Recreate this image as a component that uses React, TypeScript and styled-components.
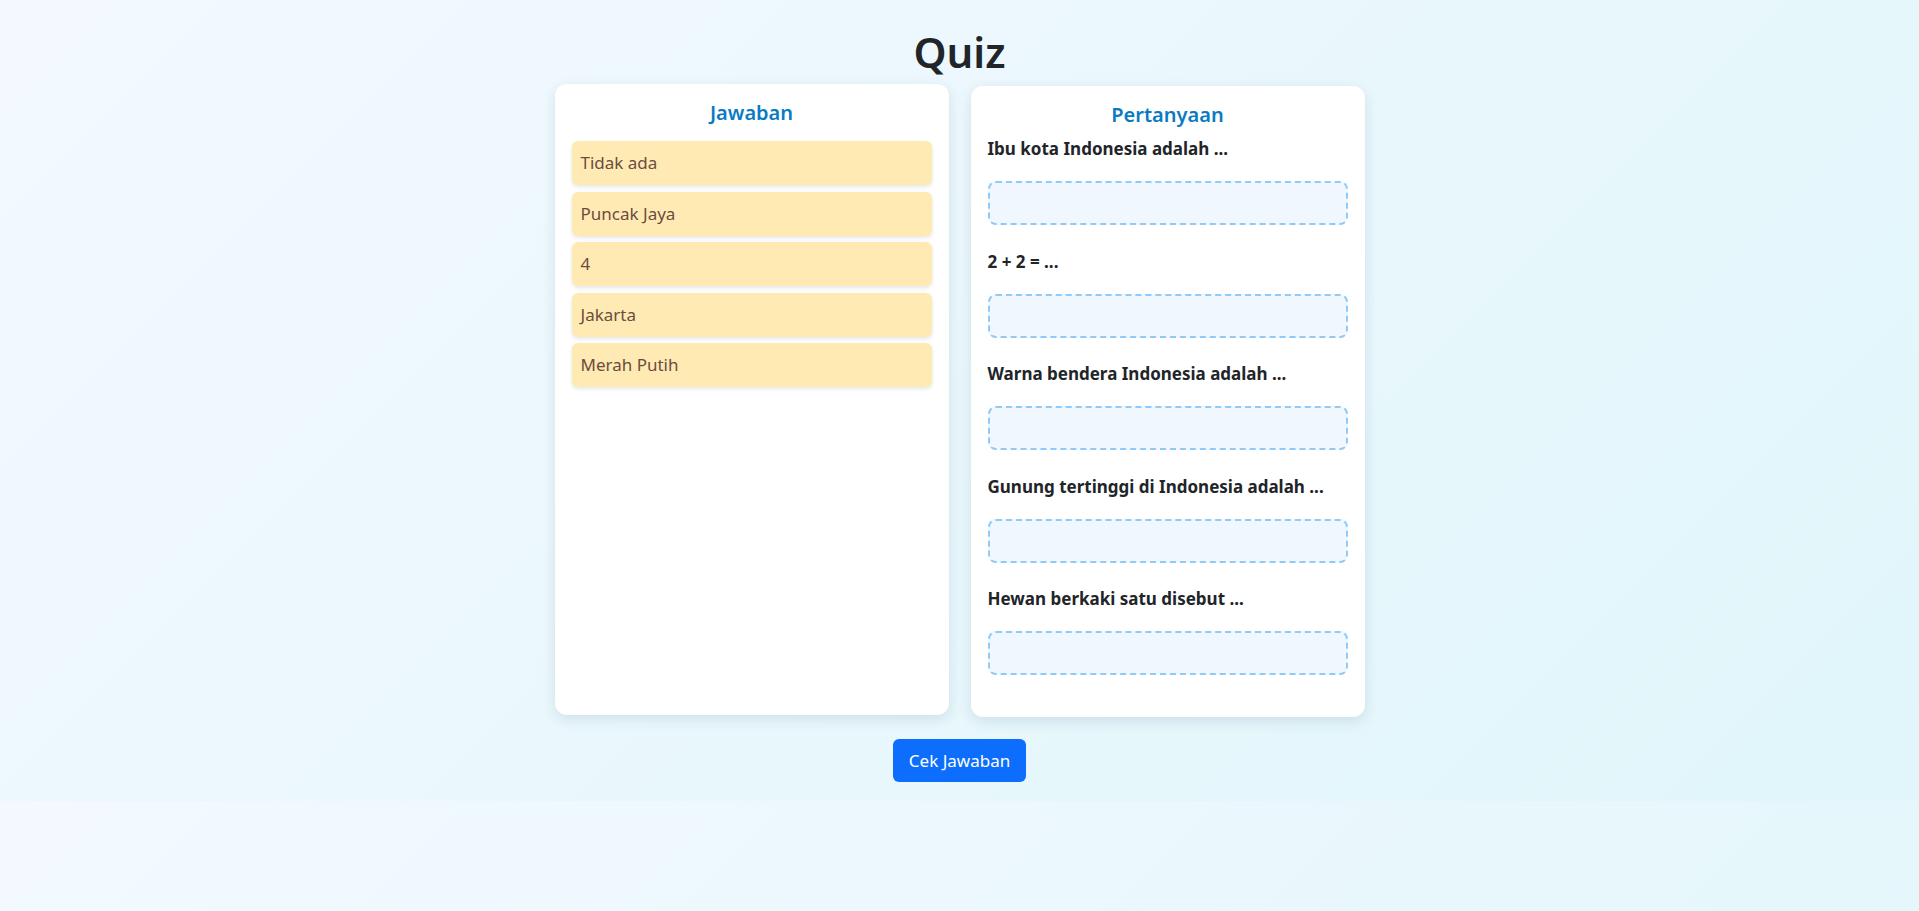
import React from "react";
import styled, { createGlobalStyle } from "styled-components";

const GlobalStyle = createGlobalStyle`
    * {
        box-sizing: border-box;
    }

    body {
        margin: 0;
        padding: 28px 20px 19px;
        font-family: "Segoe UI", "Noto Sans", "Open Sans", sans-serif;
        color: #212529;
        background: linear-gradient(135deg, #f3f9ff 0%, #e0f6fa 100%);
    }
`;

const Title = styled.h1`
    margin: 0 0 10px;
    text-align: center;
    font-size: 42px;
    line-height: 48px;
    font-weight: 600;
    color: #212529;
`;

const Board = styled.div`
    display: flex;
    justify-content: center;
    align-items: stretch;
    gap: 22px;
`;

const Card = styled.div<{ lifted?: boolean }>`
    width: 394px;
    padding: 17px;
    background: #ffffff;
    border-radius: 12px;
    box-shadow: 0 4px 14px rgba(0, 60, 90, 0.12);
    transform: ${p => (p.lifted ? "translateY(-2px)" : "none")};
`;

const CardTitle = styled.h3<{ gap: number }>`
    margin: 0 0 ${p => p.gap}px;
    text-align: center;
    font-size: 20px;
    line-height: 24px;
    font-weight: 600;
    color: #0a7bc2;
`;

const AnswerList = styled.div`
    display: flex;
    flex-direction: column;
    gap: 6.5px;
`;

const AnswerItem = styled.div`
    padding: 10px 9px;
    font-size: 17px;
    line-height: 24px;
    color: #6d4c3d;
    background: #ffeab3;
    border-radius: 6px;
    box-shadow: 0 2px 4px rgba(0, 0, 0, 0.1);
    cursor: grab;
`;

const QuestionBlock = styled.div`
    margin-bottom: 24.6px;
`;

const QuestionLabel = styled.p`
    margin: 0 0 20px;
    font-size: 17px;
    line-height: 24px;
    font-weight: 700;
    color: #212529;
`;

const DropZone = styled.div`
    height: 44px;
    border: 2px dashed #90caf9;
    border-radius: 8px;
    background: #f0f7ff;
`;

const Footer = styled.div`
    display: flex;
    justify-content: center;
    margin-top: 22px;
`;

const CheckButton = styled.button`
    height: 43px;
    padding: 0 16px;
    font-family: inherit;
    font-size: 17px;
    color: #ffffff;
    background: #0d6efd;
    border: none;
    border-radius: 6px;
    cursor: pointer;
`;

const answers = ["Tidak ada", "Puncak Jaya", "4", "Jakarta", "Merah Putih"];

const questions = [
    "Ibu kota Indonesia adalah ...",
    "2 + 2 = ...",
    "Warna bendera Indonesia adalah ...",
    "Gunung tertinggi di Indonesia adalah ...",
    "Hewan berkaki satu disebut ...",
];

const App: React.FC = () => {
    return (
        <>
            <GlobalStyle />
            <Title>Quiz</Title>
            <Board>
                <Card lifted>
                    <CardTitle gap={16}>Jawaban</CardTitle>
                    <AnswerList>
                        {answers.map(a => (
                            <AnswerItem key={a}>{a}</AnswerItem>
                        ))}
                    </AnswerList>
                </Card>
                <Card>
                    <CardTitle gap={10}>Pertanyaan</CardTitle>
                    {questions.map(q => (
                        <QuestionBlock key={q}>
                            <QuestionLabel>{q}</QuestionLabel>
                            <DropZone />
                        </QuestionBlock>
                    ))}
                </Card>
            </Board>
            <Footer>
                <CheckButton>Cek Jawaban</CheckButton>
            </Footer>
        </>
    );
};

export default App;
